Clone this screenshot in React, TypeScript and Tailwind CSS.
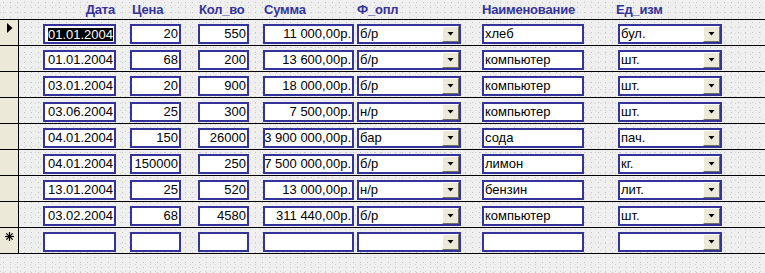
import React from "react";

type Row = {
  d: string;
  p: string;
  q: string;
  s: string;
  f: string;
  n: string;
  e: string;
};

const rows: Row[] = [
  { d: "01.01.2004", p: "20", q: "550", s: "11 000,00р.", f: "б/р", n: "хлеб", e: "бул." },
  { d: "01.01.2004", p: "68", q: "200", s: "13 600,00р.", f: "б/р", n: "компьютер", e: "шт." },
  { d: "03.01.2004", p: "20", q: "900", s: "18 000,00р.", f: "б/р", n: "компьютер", e: "шт." },
  { d: "03.06.2004", p: "25", q: "300", s: "7 500,00р.", f: "н/р", n: "компьютер", e: "шт." },
  { d: "04.01.2004", p: "150", q: "26000", s: "3 900 000,00р.", f: "бар", n: "сода", e: "пач." },
  { d: "04.01.2004", p: "150000", q: "250", s: "37 500 000,00р.", f: "б/р", n: "лимон", e: "кг." },
  { d: "13.01.2004", p: "25", q: "520", s: "13 000,00р.", f: "н/р", n: "бензин", e: "лит." },
  { d: "03.02.2004", p: "68", q: "4580", s: "311 440,00р.", f: "б/р", n: "компьютер", e: "шт." },
];

const boxBase =
  "mt-[4px] h-[20px] border-2 border-[#333399] bg-white overflow-hidden whitespace-nowrap flex items-center text-[13px] leading-[16px] text-black";

function RBox({ w, ml, children }: { w: string; ml: string; children?: React.ReactNode }) {
  return <div className={`${boxBase} ${w} ${ml} justify-end pr-[1px]`}>{children}</div>;
}

function LBox({ w, ml, children }: { w: string; ml: string; children?: React.ReactNode }) {
  return <div className={`${boxBase} ${w} ${ml} justify-start pl-[1px]`}>{children}</div>;
}

function Combo({ w, ml, children }: { w: string; ml: string; children?: React.ReactNode }) {
  return (
    <div className={`${boxBase} ${w} ${ml} justify-between pl-[1px] items-stretch`}>
      <span className="flex items-center overflow-hidden">{children}</span>
      <div className="w-[17px] shrink-0 bg-[#ece9d8] border-t border-l border-t-white border-l-white border-b border-r border-b-[#716f64] border-r-[#716f64] flex items-center justify-center">
        <svg width="7" height="4" viewBox="0 0 7 4">
          <path d="M0.5 0H6.5L3.5 3.5Z" fill="#000" />
        </svg>
      </div>
    </div>
  );
}

function Arrow() {
  return (
    <svg width="6" height="10" viewBox="0 0 6 10">
      <path d="M0 0L5.5 5L0 10Z" fill="#000" />
    </svg>
  );
}

function Star() {
  return (
    <svg width="9" height="9" viewBox="0 0 9 9">
      <g stroke="#000" strokeWidth="1.2">
        <line x1="4.5" y1="0" x2="4.5" y2="9" />
        <line x1="0" y1="4.5" x2="9" y2="4.5" />
        <line x1="1.3" y1="1.3" x2="7.7" y2="7.7" />
        <line x1="7.7" y1="1.3" x2="1.3" y2="7.7" />
      </g>
    </svg>
  );
}

export default function App() {
  return (
    <div
      className="w-[765px] h-[273px] overflow-hidden bg-[#efefef] bg-[radial-gradient(circle,#c4c4c4_0.6px,transparent_0.9px),radial-gradient(circle,#d4d4d4_0.6px,transparent_0.9px)] bg-[length:7px_5px,5px_7px] bg-[position:0_0,3px_2px]"
      style={{ fontFamily: '"Liberation Sans", Arial, sans-serif' }}
    >
      {/* header */}
      <div className="h-[19px] flex items-center text-[13px] font-bold text-[#333399] leading-[19px] tracking-[-0.2px]">
        <div className="w-[19px] shrink-0" />
        <div className="ml-[24px] w-[73px] text-right pr-[1px]">Дата</div>
        <div className="ml-[14px] w-[51px] pl-[2px]">Цена</div>
        <div className="ml-[17px] w-[51px] pl-[1px] whitespace-nowrap">Кол_во</div>
        <div className="ml-[14px] w-[91px] pl-[1px]">Сумма</div>
        <div className="ml-[3px] w-[104px]">Ф_опл</div>
        <div className="ml-[21px] w-[102px] whitespace-nowrap">Наименование</div>
        <div className="ml-[32px] w-[104px]">Ед_изм</div>
      </div>

      {rows.map((r, i) => (
        <div key={i} className="h-[26px] flex items-start border-t border-black">
          <div className="w-[19px] h-[25px] shrink-0 bg-[#ece9d8] border-r border-black flex items-start pl-[7px] pt-[3px]">
            {i === 0 ? <Arrow /> : null}
          </div>
          <RBox w="w-[73px]" ml="ml-[24px]">
            {i === 0 ? (
              <span className="bg-black text-white leading-[13px]">{r.d}</span>
            ) : (
              r.d
            )}
          </RBox>
          <RBox w="w-[51px]" ml="ml-[14px]">{r.p}</RBox>
          <RBox w="w-[51px]" ml="ml-[17px]">{r.q}</RBox>
          <RBox w="w-[91px]" ml="ml-[14px]">{r.s}</RBox>
          <Combo w="w-[104px]" ml="ml-[3px]">{r.f}</Combo>
          <LBox w="w-[102px]" ml="ml-[21px]">{r.n}</LBox>
          <Combo w="w-[104px]" ml="ml-[34px]">{r.e}</Combo>
        </div>
      ))}

      {/* new record row */}
      <div className="h-[27px] flex items-start border-t border-b border-black">
        <div className="w-[19px] h-[25px] shrink-0 bg-[#ece9d8] border-r border-black flex items-start pl-[5px] pt-[4px]">
          <Star />
        </div>
        <RBox w="w-[73px]" ml="ml-[24px]" />
        <RBox w="w-[51px]" ml="ml-[14px]" />
        <RBox w="w-[51px]" ml="ml-[17px]" />
        <RBox w="w-[91px]" ml="ml-[14px]" />
        <Combo w="w-[104px]" ml="ml-[3px]" />
        <LBox w="w-[102px]" ml="ml-[21px]" />
        <Combo w="w-[104px]" ml="ml-[34px]" />
      </div>
    </div>
  );
}
